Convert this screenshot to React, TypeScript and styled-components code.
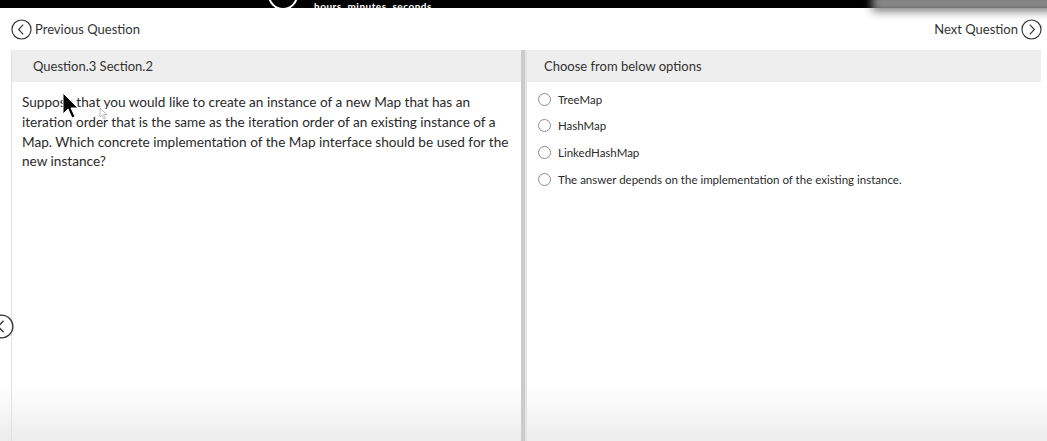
import React from "react";
import styled, { createGlobalStyle } from "styled-components";

const Global = createGlobalStyle`
  html, body { margin: 0; padding: 0; }
  body {
    width: 1047px;
    height: 441px;
    overflow: hidden;
    font-family: "Lato", "Liberation Sans", sans-serif;
    color: #2b2b2b;
    background: linear-gradient(to bottom, #ffffff 0px, #ffffff 385px, #ececec 441px);
  }
`;

const Page = styled.div`
  position: relative;
  width: 1047px;
  height: 441px;
  display: flex;
  flex-direction: column;
`;

const TopBar = styled.div`
  height: 8px;
  background: #000;
  overflow: hidden;
  display: flex;
  align-items: flex-end;
  padding-left: 268px;
  gap: 16px;
`;

const TimerRing = styled.div`
  width: 26px;
  height: 26px;
  border: 2px solid #fff;
  border-radius: 50%;
  margin-bottom: -2px;
  flex: none;
`;

const TimerText = styled.span`
  color: #fff;
  font-size: 10px;
  font-weight: 700;
  line-height: 10px;
  margin-bottom: -3px;
  letter-spacing: 0.5px;
`;

const Shade = styled.div`
  position: absolute;
  top: -6px;
  right: -10px;
  width: 185px;
  height: 18px;
  background: #8a8a8a;
  filter: blur(4px);
`;

const NavRow = styled.div`
  height: 42px;
  display: flex;
  align-items: center;
  justify-content: space-between;
  padding: 0 5px 0 11px;
  box-sizing: border-box;
`;

const NavButton = styled.div`
  display: flex;
  align-items: center;
  gap: 3px;
  font-size: 13px;
  color: #333;
`;

const Content = styled.div`
  flex: 1;
  display: flex;
  padding-left: 11px;
  padding-right: 6px;
`;

const Panel = styled.div<{ $w: number }>`
  width: ${(p) => p.$w}px;
  border-left: 1px solid #e2e2e2;
  display: flex;
  flex-direction: column;
  box-sizing: border-box;
`;

const Divider = styled.div`
  width: 4px;
  background: #cbcbcb;
  border-right: 1px solid #e6e6e6;
`;

const PanelHeader = styled.div<{ $pad: number }>`
  height: 32px;
  background: #eeeeee;
  display: flex;
  align-items: center;
  padding-left: ${(p) => p.$pad}px;
  font-size: 13px;
  color: #333;
`;

const QuestionText = styled.p`
  margin: 0;
  padding: 11px 5px 0 10px;
  font-size: 13.6px;
  line-height: 19.8px;
  color: #2a2a2a;
`;

const Options = styled.div`
  display: flex;
  flex-direction: column;
  padding: 8px 0 0 11px;
  gap: 8.7px;
`;

const Option = styled.label`
  display: flex;
  align-items: center;
  gap: 7px;
  font-size: 11.5px;
  height: 18px;
  color: #2a2a2a;
`;

const Radio = styled.span`
  width: 11px;
  height: 11px;
  border: 1px solid #8d8d8d;
  border-radius: 50%;
  background: #fff;
  flex: none;
`;

const SideArrow = styled.div`
  position: absolute;
  left: -11px;
  top: 314px;
`;

const Cursor = styled.div`
  position: absolute;
  left: 62px;
  top: 92px;
`;

const SmallCursor = styled.div`
  position: absolute;
  left: 99px;
  top: 104px;
  opacity: 0.5;
`;

const CircleArrow = ({ dir, size = 21 }: { dir: "left" | "right"; size?: number }) => (
  <svg width={size} height={size} viewBox="0 0 22 22">
    <circle cx="11" cy="11" r="10" fill="none" stroke="#333" strokeWidth="1.2" />
    {dir === "left" ? (
      <path d="M12.8 6 L8 11 L12.8 16" fill="none" stroke="#333" strokeWidth="1.2" />
    ) : (
      <path d="M9.2 6 L14 11 L9.2 16" fill="none" stroke="#333" strokeWidth="1.2" />
    )}
  </svg>
);

const options = [
  "TreeMap",
  "HashMap",
  "LinkedHashMap",
  "The answer depends on the implementation of the existing instance.",
];

export default function App() {
  return (
    <Page>
      <Global />
      <TopBar>
        <TimerRing />
        <TimerText>hours&nbsp;&nbsp;minutes&nbsp;&nbsp;seconds</TimerText>
      </TopBar>
      <Shade />
      <NavRow>
        <NavButton>
          <CircleArrow dir="left" />
          <span>Previous Question</span>
        </NavButton>
        <NavButton>
          <span>Next Question</span>
          <CircleArrow dir="right" />
        </NavButton>
      </NavRow>
      <Content>
        <Panel $w={510}>
          <PanelHeader $pad={21}>Question.3 Section.2</PanelHeader>
          <QuestionText>
            Suppose that you would like to create an instance of a new Map that has an iteration order that is
            the same as the iteration order of an existing instance of a Map. Which concrete implementation of
            the Map interface should be used for the new instance?
          </QuestionText>
        </Panel>
        <Divider />
        <Panel $w={515}>
          <PanelHeader $pad={17}>Choose from below options</PanelHeader>
          <Options>
            {options.map((o) => (
              <Option key={o}>
                <Radio />
                <span>{o}</span>
              </Option>
            ))}
          </Options>
        </Panel>
      </Content>
      <SideArrow>
        <CircleArrow dir="left" size={25} />
      </SideArrow>
      <Cursor>
        <svg width="18" height="28" viewBox="0 0 18 28">
          <path d="M1 1 L1 22 L6 17 L10 26 L13 24.5 L9 16 L16 16 Z" fill="#000" stroke="#fff" strokeWidth="1" />
        </svg>
      </Cursor>
      <SmallCursor>
        <svg width="9" height="13" viewBox="0 0 9 13">
          <path d="M1 1 L1 10 L3 8 L5 12 L6.5 11.3 L4.6 7.5 L8 7.5 Z" fill="#fff" stroke="#555" strokeWidth="0.8" />
        </svg>
      </SmallCursor>
    </Page>
  );
}
